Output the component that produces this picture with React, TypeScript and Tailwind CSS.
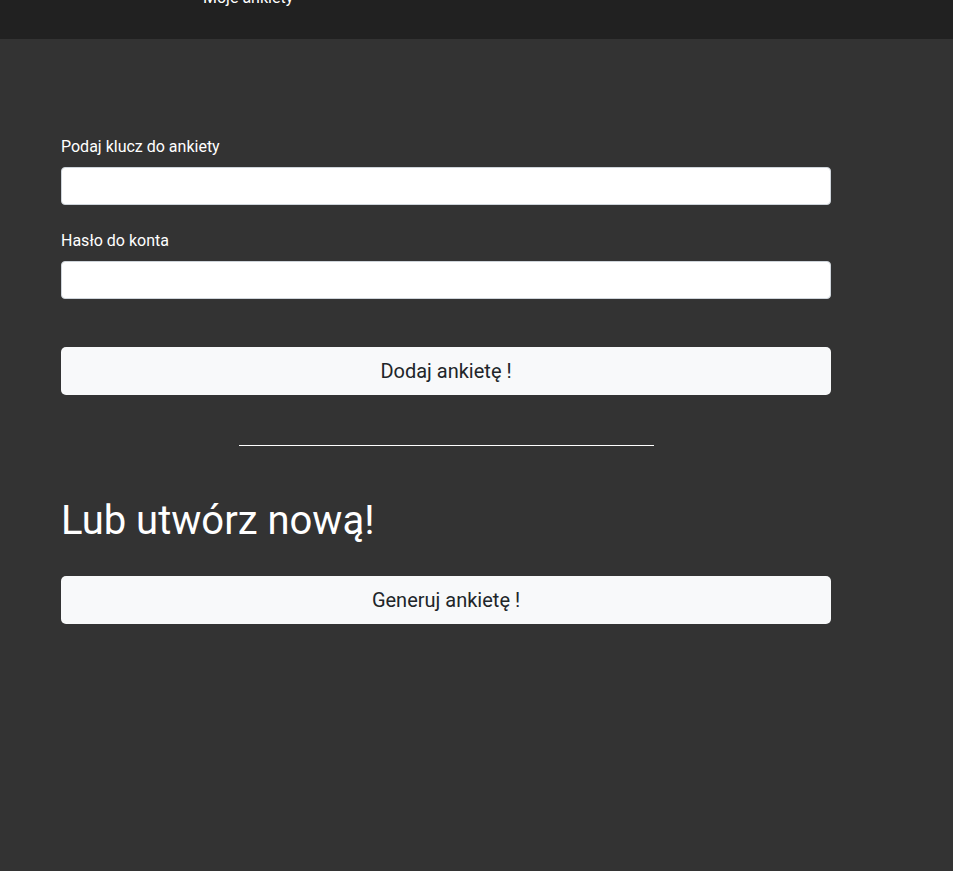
export default function App() {
  return (
    <div className="min-h-screen bg-[#333333] font-['Roboto',_'Liberation_Sans',_sans-serif] text-white">
      <nav className="h-[39px] overflow-hidden bg-[#212121]">
        <div className="-mt-[14px] ml-[203px] text-base leading-6 text-white">Moje ankiety</div>
      </nav>

      <div className="w-[770px] ml-[61px] pt-[96px]">
        <div className="mb-6">
          <label className="block text-base leading-6 mb-2">Podaj klucz do ankiety</label>
          <input type="text" className="block w-full h-[38px] rounded bg-white border border-[#ced4da] px-3 text-[#495057]" />
        </div>
        <div>
          <label className="block text-base leading-6 mb-2">Hasło do konta</label>
          <input type="password" className="block w-full h-[38px] rounded bg-white border border-[#ced4da] px-3 text-[#495057]" />
        </div>

        <button className="mt-12 block w-full h-[48px] rounded-[5px] bg-[#f8f9fa] text-[20px] leading-[30px] text-[#212529]">
          Dodaj ankietę !
        </button>

        <hr className="mt-[50px] mx-auto w-[415px] border-0 border-t border-white" />

        <h1 className="mt-[51px] text-[40px] leading-[48px] font-normal">Lub utwórz nową!</h1>

        <button className="mt-[31px] block w-full h-[48px] rounded-[5px] bg-[#f8f9fa] text-[20px] leading-[30px] text-[#212529]">
          Generuj ankietę !
        </button>
      </div>
    </div>
  )
}
